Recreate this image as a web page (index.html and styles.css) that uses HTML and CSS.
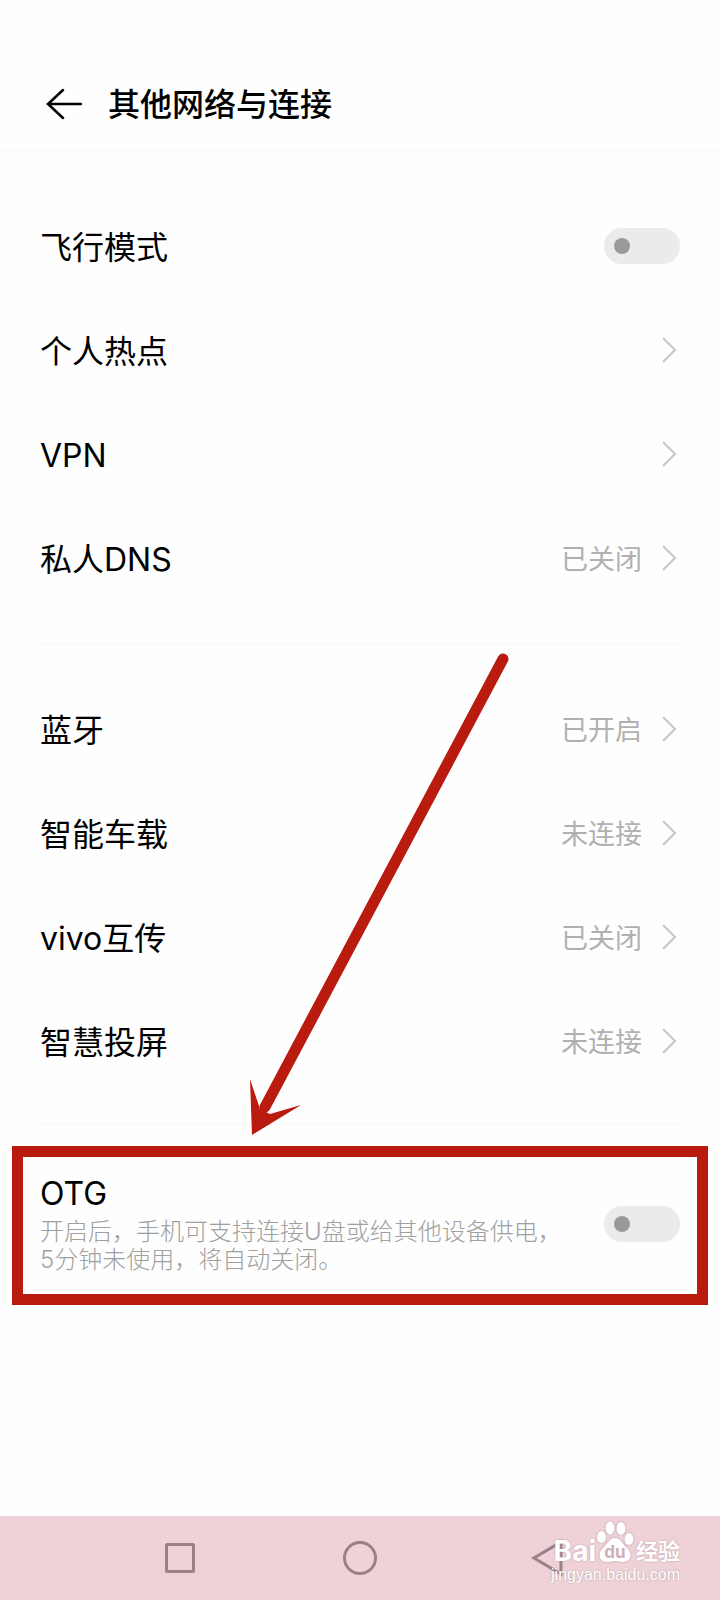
FILE: index.html
```html
<!DOCTYPE html>
<html lang="zh-CN">
<head>
  <meta charset="UTF-8" />
  <meta name="viewport" content="width=device-width, initial-scale=1.0"/>
  <title>其他网络与连接</title>
  <link rel="stylesheet" href="styles.css">
</head>
<body>
  <header class="header">
    <button class="back" aria-label="返回">
      <svg width="36" height="32" viewBox="0 0 36 32"><path d="M35 16H2M17 2L2 16L17 30"/></svg>
    </button>
    <h1>其他网络与连接</h1>
  </header>

  <main>
    <section class="group">
      <div class="row">
        <label for="airplane">飞行模式</label>
        <input type="checkbox" class="switch" id="airplane">
      </div>
      <a class="row" href="#">
        <span>个人热点</span>
        <svg class="chevron" viewBox="0 0 16 28"><path d="M2 2L14 14L2 26"/></svg>
      </a>
      <a class="row" href="#">
        <span>VPN</span>
        <svg class="chevron" viewBox="0 0 16 28"><path d="M2 2L14 14L2 26"/></svg>
      </a>
      <a class="row" href="#">
        <span>私人DNS</span>
        <span class="status">已关闭</span>
        <svg class="chevron" viewBox="0 0 16 28"><path d="M2 2L14 14L2 26"/></svg>
      </a>
    </section>

    <section class="group">
      <a class="row" href="#">
        <span>蓝牙</span>
        <span class="status">已开启</span>
        <svg class="chevron" viewBox="0 0 16 28"><path d="M2 2L14 14L2 26"/></svg>
      </a>
      <a class="row" href="#">
        <span>智能车载</span>
        <span class="status">未连接</span>
        <svg class="chevron" viewBox="0 0 16 28"><path d="M2 2L14 14L2 26"/></svg>
      </a>
      <a class="row" href="#">
        <span>vivo互传</span>
        <span class="status">已关闭</span>
        <svg class="chevron" viewBox="0 0 16 28"><path d="M2 2L14 14L2 26"/></svg>
      </a>
      <a class="row" href="#">
        <span>智慧投屏</span>
        <span class="status">未连接</span>
        <svg class="chevron" viewBox="0 0 16 28"><path d="M2 2L14 14L2 26"/></svg>
      </a>
    </section>

    <section class="otg">
      <div class="otg-text">
        <label for="otg">OTG</label>
        <p>开启后，手机可支持连接U盘或给其他设备供电，5分钟未使用，将自动关闭。</p>
      </div>
      <input type="checkbox" class="switch" id="otg">
    </section>

    <!-- arrow pointing at the OTG box -->
    <svg class="arrow" width="260" height="484" viewBox="0 0 260 484">
      <path class="shaft" d="M253 8L15 456"/>
      <path class="head" d="M2 484L0 428L10 458L20 463L51 454Z"/>
    </svg>
  </main>

  <nav class="navbar">
    <button aria-label="最近任务">
      <svg width="36" height="36" viewBox="0 0 36 36"><rect x="4.5" y="4.5" width="27" height="27" rx="1"/></svg>
    </button>
    <button aria-label="主页">
      <svg width="36" height="36" viewBox="0 0 36 36"><circle cx="18" cy="18" r="15.5"/></svg>
    </button>
    <button aria-label="后退">
      <svg width="36" height="36" viewBox="0 0 36 36"><path d="M39 2V34L12 18Z"/></svg>
    </button>

    <div class="watermark">
      <div class="brand">
        <span class="bai">Bai</span>
        <span class="paw">
          <svg width="38" height="42" viewBox="0 0 38 42">
            <ellipse cx="5.500" cy="16" rx="4.500" ry="6"/>
            <ellipse cx="14" cy="7" rx="4.500" ry="6.500"/>
            <ellipse cx="25" cy="7.500" rx="4.500" ry="6.500"/>
            <ellipse cx="33" cy="18" rx="4.500" ry="6"/>
            <path d="M19 17C25 17 26 23 31 27C36 31 36 40 28 41C24 41 22 40 19 40C16 40 14 41 10 41C2 40 2 31 7 27C12 23 13 17 19 17Z"/>
          </svg>
          <span class="du">du</span>
        </span>
        <span class="jingyan">经验</span>
      </div>
      <div class="url">jingyan.baidu.com</div>
    </div>
  </nav>
</body>
</html>
```
FILE: styles.css
```css
* {
  box-sizing: border-box;
}

body {
  margin: 0;
  min-height: 100vh;
  display: flex;
  flex-direction: column;
  background: #fefefe;
  color: #000;
  font-family: Inter, "Noto Sans CJK SC", sans-serif;
  font-size: 32px;
  line-height: 40px;
}

button {
  padding: 0;
  border: 0;
  background: none;
}

svg {
  display: block;
  fill: none;
}

.header {
  display: flex;
  align-items: center;
  gap: 26px;
  padding: 83px 40px 25px 46px;
  border-bottom: 2px solid #fafafa;
}

.header h1 {
  margin: 0;
  padding-top: 2px;
  font-size: 32px;
  font-weight: 500;
}

.back svg {
  stroke: #000;
  stroke-width: 2.5;
  stroke-linecap: round;
}

main {
  position: relative;
}

.group {
  margin: 0 40px;
  padding: 33px 0 31px;
  border-bottom: 1px solid #f7f7f7;
}

.group:first-child {
  padding: 42px 0 33px;
}

.row {
  display: flex;
  align-items: center;
  height: 104px;
  color: #000;
  text-decoration: none;
}

.row > :first-child {
  flex: 1;
}

.row label,
.row span {
  padding-top: 3px;
}

.status {
  color: #b0b0b0;
  font-size: 27px;
}

.chevron {
  width: 16px;
  height: 28px;
  margin: 0 3px 0 19px;
  stroke: #c8c8c8;
  stroke-width: 2.2;
}

.switch {
  appearance: none;
  flex: none;
  display: flex;
  align-items: center;
  width: 76px;
  height: 36px;
  margin: 0;
  padding: 0 10px;
  border-radius: 18px;
  background: #ebebeb;
}

.switch::before {
  content: "";
  width: 16px;
  height: 16px;
  border-radius: 50%;
  background: #9a9a9a;
}

.switch:checked {
  justify-content: flex-end;
}

.otg {
  display: flex;
  align-items: center;
  justify-content: space-between;
  gap: 40px;
  margin: 21px 12px;
  padding: 17px 17px 20px;
  border: 11px solid #b91b0f;
}

.otg p {
  margin: 4px 0 0;
  color: #a0a0a0;
  font-size: 24px;
  font-weight: 300;
  line-height: 28px;
}

.arrow {
  position: absolute;
  top: 499px;
  left: 250px;
  pointer-events: none;
}

.shaft {
  stroke: #b91b0f;
  stroke-width: 11;
  stroke-linecap: round;
}

.head {
  fill: #b91b0f;
}

.navbar {
  position: relative;
  display: flex;
  height: 84px;
  margin-top: auto;
  padding: 0 90px;
  background: #eed2d8;
}

.navbar button {
  flex: 1;
  display: flex;
  align-items: center;
  justify-content: center;
}

.navbar button svg {
  overflow: visible;
  stroke: #988187;
  stroke-width: 3;
}

.watermark {
  position: absolute;
  right: 40px;
  bottom: 13px;
  color: #fff;
  text-shadow: 0 0 2px #b09aa0;
}

.brand {
  display: flex;
  align-items: flex-end;
  justify-content: flex-end;
}

.bai {
  font-size: 28px;
  font-weight: 700;
  line-height: 24px;
}

.paw {
  position: relative;
  margin-right: 2px;
}

.paw svg {
  fill: #fff;
  filter: drop-shadow(0 0 1px #b09aa0);
}

.du {
  position: absolute;
  left: 0;
  right: 0;
  bottom: 0;
  color: #cdb0b8;
  font-size: 17px;
  font-weight: 700;
  line-height: 22px;
  text-align: center;
  text-shadow: none;
}

.jingyan {
  font-size: 22px;
  font-weight: 700;
  line-height: 24px;
}

.url {
  font-family: "Liberation Sans", sans-serif;
  font-size: 16px;
  line-height: 24px;
  text-align: right;
}
```
